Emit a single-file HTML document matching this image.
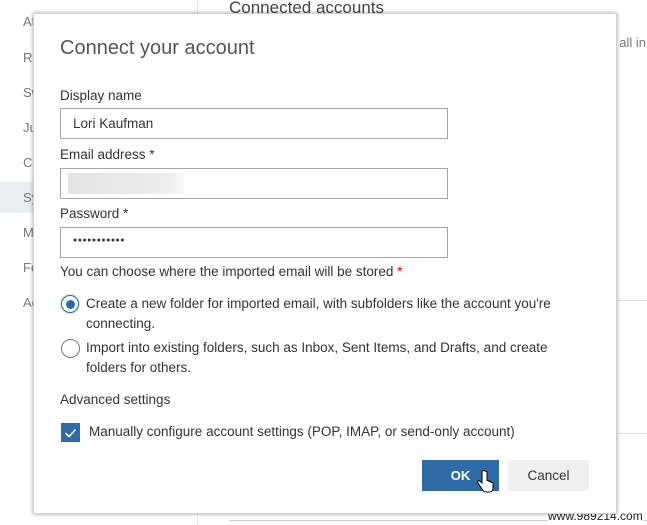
<!DOCTYPE html>
<html><head><style>
body{margin:0;width:647px;height:525px;overflow:hidden;background:#fff;font-family:"Liberation Sans",sans-serif;position:relative;color:#333}
.a{position:absolute;white-space:nowrap}
.nav{position:absolute;left:0;top:0;width:197px;height:525px;background:#fff;border-right:1px solid #e6e6e6}
.dlg{position:absolute;left:33px;top:13px;width:582px;height:499px;background:#fff;box-shadow:0 0 4px rgba(0,0,0,.35);border:1px solid #d0d0d0}
.inp{position:absolute;left:60px;width:386px;height:29px;border:1px solid #a6a6a6;background:#fff}
.lbl{position:absolute;left:60px;font-size:13.5px;color:#333}
.t{font-size:13.5px;color:#333}
.n{font-size:13px;color:#777}
</style></head><body>
<div class="nav"></div>
<div class="a" style="left:0;top:182px;width:197px;height:31px;background:#e9eef3"></div>
<div class="a n" style="left:23px;top:14px">At</div>
<div class="a n" style="left:23px;top:50px">Re</div>
<div class="a n" style="left:23px;top:85px">Sw</div>
<div class="a n" style="left:23px;top:120px">Ju</div>
<div class="a n" style="left:23px;top:155px">Co</div>
<div class="a n" style="left:23px;top:190px">Sy</div>
<div class="a n" style="left:23px;top:225px">M</div>
<div class="a n" style="left:23px;top:260px">Fo</div>
<div class="a n" style="left:23px;top:295px">Ac</div>
<div class="a" style="left:229px;top:-2px;font-size:17px;color:#444">Connected accounts</div>
<div class="a n" style="left:612px;top:35px">t all in</div>
<div class="a" style="left:600px;top:300px;width:47px;height:1px;background:#ddd"></div>
<div class="a" style="left:600px;top:433px;width:47px;height:1px;background:#ddd"></div>
<div class="a" style="left:229px;top:520px;width:418px;height:1px;background:#ccc"></div>
<div class="a" style="left:548px;top:509px;font-size:12px;color:#222;background:#fff">www.989214.com</div>
<div class="dlg"></div>
<div class="a" style="left:60px;top:37px;font-size:20px;color:#555">Connect your account</div>
<div class="lbl" style="top:88px">Display name</div>
<div class="inp" style="top:108px"><span class="a t" style="left:12px;top:7px">Lori Kaufman</span></div>
<div class="lbl" style="top:147px">Email address *</div>
<div class="inp" style="top:168px"><div class="a" style="left:7px;top:4px;width:116px;height:21px;background:linear-gradient(90deg,#e4e4e4,#ececec 80%,#f6f6f6)"></div></div>
<div class="lbl" style="top:206px">Password *</div>
<div class="inp" style="top:227px"><span class="a" style="left:12px;top:9px;font-size:7px;letter-spacing:0.5px">●●●●●●●●●●●</span></div>
<div class="lbl" style="top:264px">You can choose where the imported email will be stored <span style="color:#c00">*</span></div>
<div class="a" style="left:61px;top:295px;width:16px;height:16px;border:1.5px solid #2b6cb0;border-radius:50%;box-shadow:0 0 0 1px #cfe0f2"><div style="margin:3.5px;width:9px;height:9px;border-radius:50%;background:#2b6cb0"></div></div>
<div class="a t" style="left:86px;top:294px;line-height:20px">Create a new folder for imported email, with subfolders like the account you're<br>connecting.</div>
<div class="a" style="left:61px;top:339px;width:17px;height:17px;border:1.5px solid #777;border-radius:50%"></div>
<div class="a t" style="left:86px;top:338px;line-height:20px">Import into existing folders, such as Inbox, Sent Items, and Drafts, and create<br>folders for others.</div>
<div class="lbl" style="top:392px">Advanced settings</div>
<div class="a" style="left:61px;top:423px;width:19px;height:19px;background:#2f6ca7"><svg width="19" height="19"><path d="M4.5 10l3.5 3.5 6.5-7" stroke="#fff" stroke-width="1.5" fill="none"/></svg></div>
<div class="a t" style="left:89px;top:424px">Manually configure account settings (POP, IMAP, or send-only account)</div>
<div class="a" style="left:422px;top:460px;width:77px;height:31px;background:#2f6ca7;color:#fff;font-weight:bold;font-size:13px;text-align:center;line-height:31px">OK</div>
<div class="a" style="left:508px;top:460px;width:81px;height:31px;background:#f0f0f0;color:#333;font-size:13.5px;text-align:center;line-height:31px">Cancel</div>
<svg class="a" style="left:477px;top:470px" width="18" height="24"><path d="M5 2v11l-2-2c-1-1-3 0-2 2l4 6c1 2 2 3 5 3h3c2 0 3-2 3-4v-5c0-1-2-1-2 0v-1c0-1-2-1-2 0v-1c0-1-2-1-2 0V2C7 0 5 0 5 2z" fill="#fff" stroke="#000" stroke-width="1"/></svg>
</body></html>
